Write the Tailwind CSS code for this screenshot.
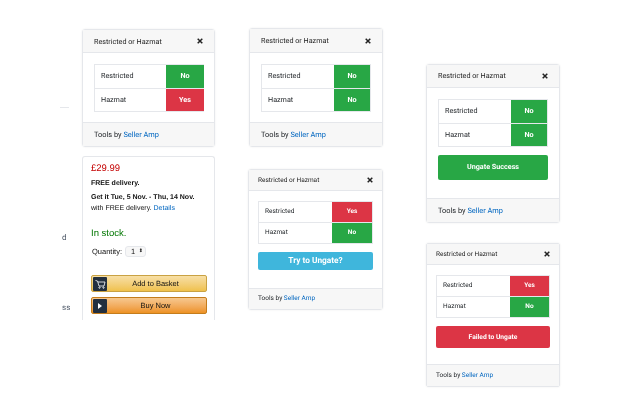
<!DOCTYPE html>
<html lang="en">

<head>
    <meta charset="UTF-8" />
    <title>Restricted or Hazmat</title>
    <script src="https://cdn.jsdelivr.net/npm/@tailwindcss/browser@4"></script>
</head>

<body class="w-[640px] h-[400px] overflow-hidden bg-white">
<div class="relative w-[640px] h-[400px] blur-[0.3px] [will-change:transform] font-['Roboto',sans-serif] text-[#212529] [text-rendering:geometricPrecision]">

    <!-- Bits of the page behind the panels -->
    <div class="absolute left-[60px] top-[107px] w-[9px] h-px bg-gray-200"></div>
    <div class="absolute left-[62px] top-[232px] text-[8px] leading-[12px] text-gray-600">d</div>
    <div class="absolute left-[62px] top-[302px] text-[8px] leading-[12px] text-gray-600">ss</div>

    <div class="flex items-start">
        <!-- Column 1 -->
        <div class="ml-[82px] mt-[29px] w-[133px] flex flex-col gap-[9px]">
            <section class="h-[118px] flex flex-col rounded-[3px] border border-gray-200 shadow-[0_0_2px_rgba(0,0,0,0.08)]">
                <div class="h-[23px] shrink-0 flex items-center justify-between px-[11px] bg-[#f7f7f7] border-b border-gray-200 text-[7.2px] text-[#222]">
                    <span class="mt-[2px]">Restricted or Hazmat</span>
                    <svg width="6" height="6" viewBox="0 0 6 6" stroke="#222" stroke-width="1.5"><path d="M0.7 0.7 L5.3 5.3 M5.3 0.7 L0.7 5.3"/></svg>
                </div>
                <div class="flex-1 pt-[11px] pl-[11px] pr-[10px]">
                    <div class="border-l border-y border-gray-200 text-[7.2px]">
                        <div class="h-[24px] flex border-b border-gray-200">
                            <div class="flex-1 flex items-center pl-[6px]">Restricted</div>
                            <div class="w-[38px] flex items-center justify-center bg-[#28a745] text-white font-bold">No</div>
                        </div>
                        <div class="h-[22px] flex">
                            <div class="flex-1 flex items-center pl-[6px]">Hazmat</div>
                            <div class="w-[38px] flex items-center justify-center bg-[#dc3545] text-white font-bold">Yes</div>
                        </div>
                    </div>
                </div>
                <div class="h-[24px] shrink-0 flex items-center pl-[11px] bg-[#f7f7f7] border-t border-gray-200 text-[7.4px]">
                    <span>Tools by <a class="text-[#0066c0]">Seller Amp</a></span>
                </div>
            </section>

            <!-- Amazon buy box -->
            <section class="h-[164px] rounded-t-[3px] border-t border-x border-gray-200 pl-[8px] pr-[7px] font-['Liberation_Sans',sans-serif]">
                <div class="mt-[5px] text-[9.5px] leading-[14px] text-[#c40000]">£29.99</div>
                <div class="mt-[3px] text-[7px] leading-[10px] font-bold text-[#111]">FREE delivery.</div>
                <div class="mt-[4px] text-[7px] leading-[10px] font-bold text-[#111]">Get it Tue, 5 Nov. - Thu, 14 Nov.</div>
                <div class="mt-[1px] text-[7px] leading-[10px] text-[#111]">with FREE delivery. <a class="text-[#0066c0]">Details</a></div>
                <div class="mt-[13px] text-[9.5px] leading-[14px] text-[#007600]">In stock.</div>
                <div class="mt-[5px] ml-px flex items-center gap-[3px] text-[7.5px] text-[#111]">
                    <span>Quantity:</span>
                    <span class="w-[21px] h-[11px] flex items-center justify-between pl-[5px] pr-[2px] rounded-[3px] border border-gray-200 bg-[#f7f7f7]">1<span class="text-[5px]">⬍</span></span>
                </div>
                <div class="mt-[18px] h-[17px] flex items-center rounded-[2px] border border-[#c9a243] bg-gradient-to-b from-[#f7dfa5] to-[#f0c14b] text-[7.5px] text-[#111]">
                    <span class="ml-px w-[14px] h-[14px] flex items-center justify-center rounded-[1px] bg-[#232f3e]">
                        <svg width="11" height="10" viewBox="0 0 11 10" fill="none" stroke="#fff" stroke-width="0.8"><path d="M0.5 1.5 L2.5 2 L4 7 H9 L10 3 H3"/><circle cx="4.5" cy="8.6" r="0.7"/><circle cx="8.5" cy="8.6" r="0.7"/></svg>
                    </span>
                    <span class="flex-1 text-center pr-[2px]">Add to Basket</span>
                </div>
                <div class="mt-[5px] h-[17px] flex items-center rounded-[2px] border border-[#c47c1c] bg-gradient-to-b from-[#f6c88f] to-[#ed9220] text-[7.5px] text-[#111]">
                    <span class="ml-px w-[14px] h-[14px] flex items-center justify-center rounded-[1px] bg-[#232f3e]">
                        <svg width="6" height="8" viewBox="0 0 6 8" fill="#fff"><path d="M1 1 L5 4 L1 7 Z"/></svg>
                    </span>
                    <span class="flex-1 text-center pr-[2px]">Buy Now</span>
                </div>
            </section>
        </div>

        <!-- Column 2 -->
        <div class="ml-[33px] mt-[28px] w-[135px] flex flex-col gap-[22px]">
            <section class="ml-px w-[134px] h-[119px] flex flex-col rounded-[3px] border border-gray-200 shadow-[0_0_2px_rgba(0,0,0,0.08)]">
                <div class="h-[24px] shrink-0 flex items-center justify-between px-[11px] bg-[#f7f7f7] border-b border-gray-200 text-[7.2px] text-[#222]">
                    <span class="mt-[2px]">Restricted or Hazmat</span>
                    <svg width="6" height="6" viewBox="0 0 6 6" stroke="#222" stroke-width="1.5"><path d="M0.7 0.7 L5.3 5.3 M5.3 0.7 L0.7 5.3"/></svg>
                </div>
                <div class="flex-1 pt-[11px] px-[11px]">
                    <div class="border border-gray-200 text-[7.2px]">
                        <div class="h-[24px] flex border-b border-gray-200">
                            <div class="flex-1 flex items-center pl-[6px]">Restricted</div>
                            <div class="w-[36px] flex items-center justify-center bg-[#28a745] text-white font-bold">No</div>
                        </div>
                        <div class="h-[22px] flex">
                            <div class="flex-1 flex items-center pl-[6px]">Hazmat</div>
                            <div class="w-[36px] flex items-center justify-center bg-[#28a745] text-white font-bold">No</div>
                        </div>
                    </div>
                </div>
                <div class="h-[24px] shrink-0 flex items-center pl-[11px] bg-[#f7f7f7] border-t border-gray-200 text-[7.4px]">
                    <span>Tools by <a class="text-[#0066c0]">Seller Amp</a></span>
                </div>
            </section>

            <section class="h-[141px] flex flex-col rounded-[3px] border border-gray-200 shadow-[0_0_2px_rgba(0,0,0,0.08)]">
                <div class="h-[21px] shrink-0 flex items-center justify-between px-[9px] bg-[#f7f7f7] border-b border-gray-200 text-[6.5px] text-[#222]">
                    <span class="mt-[2px]">Restricted or Hazmat</span>
                    <svg width="6" height="6" viewBox="0 0 6 6" stroke="#222" stroke-width="1.5"><path d="M0.7 0.7 L5.3 5.3 M5.3 0.7 L0.7 5.3"/></svg>
                </div>
                <div class="flex-1 pt-[10px] px-[9px]">
                    <div class="border border-gray-200 text-[6.5px]">
                        <div class="h-[21px] flex border-b border-gray-200">
                            <div class="flex-1 flex items-center pl-[6px]">Restricted</div>
                            <div class="w-[40px] flex items-center justify-center bg-[#dc3545] text-white font-bold">Yes</div>
                        </div>
                        <div class="h-[20px] flex">
                            <div class="flex-1 flex items-center pl-[6px]">Hazmat</div>
                            <div class="w-[40px] flex items-center justify-center bg-[#28a745] text-white font-bold">No</div>
                        </div>
                    </div>
                    <div class="mt-[8px] h-[18px] flex items-center justify-center rounded-[2px] bg-[#3fb6dc] text-white text-[8.3px] font-bold">Try to Ungate?</div>
                </div>
                <div class="h-[21px] shrink-0 flex items-center pl-[9px] bg-[#f7f7f7] border-t border-gray-200 text-[6.5px]">
                    <span>Tools by <a class="text-[#0066c0]">Seller Amp</a></span>
                </div>
            </section>
        </div>

        <!-- Column 3 -->
        <div class="ml-[43px] mt-[64px] w-[134px] flex flex-col gap-[20px]">
            <section class="h-[159px] flex flex-col rounded-[3px] border border-gray-200 shadow-[0_0_2px_rgba(0,0,0,0.08)]">
                <div class="h-[23px] shrink-0 flex items-center justify-between px-[11px] bg-[#f7f7f7] border-b border-gray-200 text-[7.2px] text-[#222]">
                    <span>Restricted or Hazmat</span>
                    <svg width="6" height="6" viewBox="0 0 6 6" stroke="#222" stroke-width="1.5"><path d="M0.7 0.7 L5.3 5.3 M5.3 0.7 L0.7 5.3"/></svg>
                </div>
                <div class="flex-1 pt-[11px] px-[11px]">
                    <div class="border border-gray-200 text-[7.2px]">
                        <div class="h-[24px] flex border-b border-gray-200">
                            <div class="flex-1 flex items-center pl-[6px]">Restricted</div>
                            <div class="w-[36px] flex items-center justify-center bg-[#28a745] text-white font-bold">No</div>
                        </div>
                        <div class="h-[22px] flex">
                            <div class="flex-1 flex items-center pl-[6px]">Hazmat</div>
                            <div class="w-[36px] flex items-center justify-center bg-[#28a745] text-white font-bold">No</div>
                        </div>
                    </div>
                    <div class="mt-[8px] h-[25px] flex items-center justify-center rounded-[2px] bg-[#28a745] text-white text-[7.2px] font-bold">Ungate Success</div>
                </div>
                <div class="h-[24px] shrink-0 flex items-center pl-[11px] bg-[#f7f7f7] border-t border-gray-200 text-[7.4px]">
                    <span>Tools by <a class="text-[#0066c0]">Seller Amp</a></span>
                </div>
            </section>

            <section class="h-[144px] flex flex-col rounded-[2px] border border-gray-200 shadow-[0_0_2px_rgba(0,0,0,0.08)]">
                <div class="h-[21px] shrink-0 flex items-center justify-between px-[9px] bg-[#f7f7f7] border-b border-gray-200 text-[6.5px] text-[#222]">
                    <span class="mt-[2px]">Restricted or Hazmat</span>
                    <svg width="6" height="6" viewBox="0 0 6 6" stroke="#222" stroke-width="1.5"><path d="M0.7 0.7 L5.3 5.3 M5.3 0.7 L0.7 5.3"/></svg>
                </div>
                <div class="flex-1 pt-[10px] px-[9px]">
                    <div class="border border-gray-200 text-[6.5px]">
                        <div class="h-[21px] flex border-b border-gray-200">
                            <div class="flex-1 flex items-center pl-[6px]">Restricted</div>
                            <div class="w-[39px] flex items-center justify-center bg-[#dc3545] text-white font-bold">Yes</div>
                        </div>
                        <div class="h-[20px] flex">
                            <div class="flex-1 flex items-center pl-[6px]">Hazmat</div>
                            <div class="w-[39px] flex items-center justify-center bg-[#28a745] text-white font-bold">No</div>
                        </div>
                    </div>
                    <div class="mt-[8px] h-[22px] flex items-center justify-center rounded-[2px] bg-[#dc3545] text-white text-[6.7px] font-bold">Failed to Ungate</div>
                </div>
                <div class="h-[22px] shrink-0 flex items-center pl-[9px] bg-[#f7f7f7] border-t border-gray-200 text-[6.5px]">
                    <span>Tools by <a class="text-[#0066c0]">Seller Amp</a></span>
                </div>
            </section>
        </div>
    </div>
</div>
</body>

</html>
